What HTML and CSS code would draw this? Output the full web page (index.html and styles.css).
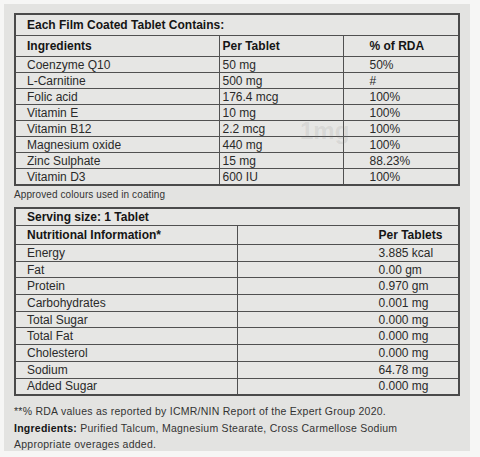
FILE: index.html
```html
<!DOCTYPE html>
<html>
<head>
<meta charset="utf-8">
<link rel="stylesheet" href="styles.css">
</head>
<body>
<div class="panel">
  <table class="t1">
    <colgroup><col class="c1"><col class="c2"><col class="c3"></colgroup>
    <tr class="title"><th colspan="3">Each Film Coated Tablet Contains:</th></tr>
    <tr class="head"><th>Ingredients</th><th class="v">Per Tablet</th><th class="r">% of RDA</th></tr>
    <tr><td>Coenzyme Q10</td><td class="v">50 mg</td><td class="r">50%</td></tr>
    <tr><td>L-Carnitine</td><td class="v">500 mg</td><td class="r">#</td></tr>
    <tr><td>Folic acid</td><td class="v">176.4 mcg</td><td class="r">100%</td></tr>
    <tr><td>Vitamin E</td><td class="v">10 mg</td><td class="r">100%</td></tr>
    <tr><td>Vitamin B12</td><td class="v">2.2 mcg</td><td class="r">100%</td></tr>
    <tr><td>Magnesium oxide</td><td class="v">440 mg</td><td class="r">100%</td></tr>
    <tr><td>Zinc Sulphate</td><td class="v">15 mg</td><td class="r">88.23%</td></tr>
    <tr><td>Vitamin D3</td><td class="v">600 IU</td><td class="r">100%</td></tr>
  </table>
  <p class="note">Approved colours used in coating</p>
  <table class="t2">
    <colgroup><col class="d1"><col class="d2"></colgroup>
    <tr class="title"><th colspan="2">Serving size: 1 Tablet</th></tr>
    <tr class="head"><th>Nutritional Information*</th><th class="n">Per Tablets</th></tr>
    <tr><td>Energy</td><td class="n">3.885 kcal</td></tr>
    <tr><td>Fat</td><td class="n">0.00 gm</td></tr>
    <tr><td>Protein</td><td class="n">0.970 gm</td></tr>
    <tr><td>Carbohydrates</td><td class="n">0.001 mg</td></tr>
    <tr><td>Total Sugar</td><td class="n">0.000 mg</td></tr>
    <tr><td>Total Fat</td><td class="n">0.000 mg</td></tr>
    <tr><td>Cholesterol</td><td class="n">0.000 mg</td></tr>
    <tr><td>Sodium</td><td class="n">64.78 mg</td></tr>
    <tr><td>Added Sugar</td><td class="n">0.000 mg</td></tr>
  </table>
  <div class="foot">
    <p>**% RDA values as reported by ICMR/NIN Report of the Expert Group 2020.</p>
    <p><b>Ingredients:</b> Purified Talcum, Magnesium Stearate, Cross Carmellose Sodium</p>
    <p>Appropriate overages added.</p>
  </div>
  <span class="mark">1mg</span>
</div>
</body>
</html>
```

FILE: styles.css
```css
html, body {
  margin: 0;
  padding: 0;
  background: #f6f6f5;
}
body {
  width: 480px;
  height: 457px;
  overflow: hidden;
  font-family: "Liberation Sans", Arial, sans-serif;
}
.panel {
  position: relative;
  margin: 4px 0 0 4px;
  width: 466px;
  height: 447px;
  box-sizing: border-box;
  padding: 9px 0 0 10px;
  background: #e3e3e1;
  color: #2a2a2a;
}
table {
  border-collapse: collapse;
  width: 446px;
  table-layout: fixed;
  background: #e6e6e4;
  border: 2px solid #4a4a4a;
  font-size: 12px;
  letter-spacing: 0;
}
th, td {
  border: 1px solid #505050;
  padding: 0 0 0 11px;
  text-align: left;
  white-space: nowrap;
  line-height: 14px;
}
th {
  font-weight: bold;
  color: #151515;
}
.t1 .c1 { width: 204px; }
.t1 .c2 { width: 124px; }
.t1 .title th { height: 20px; }
.t1 .head th { height: 20px; }
.t1 td { height: 15px; }
.t1 .v { padding-left: 3px; }
.t1 .r { padding-left: 26px; }
.note {
  margin: 3px 0 0 0;
  height: 18px;
  font-size: 10px;
  letter-spacing: 0.1px;
  line-height: 12px;
  color: #333;
}
.t2 .d1 { width: 222px; }
.t2 .title th { height: 16px; }
.t2 .head th { height: 18px; }
.t2 td { height: 15.7px; }
.t2 .n { padding-left: 141px; }
.foot {
  margin-top: 7px;
  font-size: 10.5px;
  letter-spacing: 0.25px;
  line-height: 16.5px;
  color: #333;
}
.foot p { margin: 0; }
.foot b { color: #151515; }
.mark {
  position: absolute;
  left: 296px;
  top: 113px;
  font-size: 24px;
  font-weight: bold;
  color: rgba(120, 120, 120, 0.15);
}
```
